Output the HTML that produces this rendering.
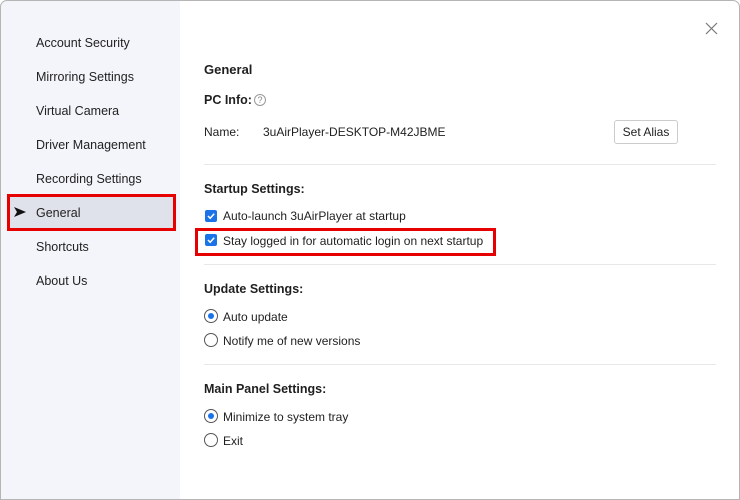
<!DOCTYPE html>
<html><head><style>
*{margin:0;padding:0;box-sizing:border-box}
body{width:740px;height:500px;background:#fff;font-family:"Liberation Sans",sans-serif;font-size:12px;color:#1f1f1f;position:relative;overflow:hidden}
.win{position:absolute;left:0;top:0;width:740px;height:500px;background:#fff;border-radius:7px 7px 0 0;overflow:hidden}
.frame{position:absolute;left:0;top:0;width:740px;height:500px;border:1px solid #b5b5b5;border-radius:7px 7px 0 0;pointer-events:none}
.side{position:absolute;left:0;top:0;width:180px;height:500px;background:#f3f5fa}
.nav{position:absolute;left:36px;font-size:12.5px;color:#222}
.sel{position:absolute;left:7px;top:194px;width:169px;height:37px;background:#dfe2ea;border:3px solid #e60000}
.t{position:absolute;white-space:nowrap}
.h{font-weight:bold;font-size:12.5px}
.cb{position:absolute;width:12px;height:12px;background:#1a73e8;border-radius:2px}
.cb svg{position:absolute;left:1px;top:1px}
.rd{position:absolute;width:14px;height:14px;border:1px solid #555;border-radius:50%;background:#fff}
.rd.on::after{content:"";position:absolute;left:3px;top:3px;width:6px;height:6px;border-radius:50%;background:#1a73e8}
.hr{position:absolute;left:204px;width:512px;height:1px;background:#e8e8e8}
</style></head><body>
<div class="win">
<div class="side"></div>
<div class="sel"></div>
<div class="nav" style="top:36px">Account Security</div>
<div class="nav" style="top:70px">Mirroring Settings</div>
<div class="nav" style="top:104px">Virtual Camera</div>
<div class="nav" style="top:138px">Driver Management</div>
<div class="nav" style="top:172px">Recording Settings</div>
<div class="nav" style="top:206px">General</div>
<svg style="position:absolute;left:14px;top:207px" width="12" height="10"><path d="M0 0 L12 5 L0 10 L3 5Z" fill="#111"/></svg>
<div class="nav" style="top:240px">Shortcuts</div>
<div class="nav" style="top:274px">About Us</div>

<svg style="position:absolute;left:705px;top:22px" width="13" height="13"><path d="M1 1L12 12M12 1L1 12" stroke="#777" stroke-width="1.2"/></svg>

<div class="t h" style="left:204px;top:62px;font-size:13px">General</div>
<div class="t h" style="left:204px;top:93px">PC Info:</div>
<div style="position:absolute;left:254px;top:94px;width:12px;height:12px;border:1px solid #999;border-radius:50%;font-size:9px;color:#888;text-align:center;line-height:10px">?</div>
<div class="t" style="left:204px;top:125px">Name:</div>
<div class="t" style="left:263px;top:125px">3uAirPlayer-DESKTOP-M42JBME</div>
<div style="position:absolute;left:614px;top:120px;width:64px;height:24px;border:1px solid #ccc;border-radius:3px;text-align:center;line-height:22px">Set Alias</div>
<div class="hr" style="top:164px"></div>
<div class="t h" style="left:204px;top:182px">Startup Settings:</div>
<div class="cb" style="left:205px;top:210px"><svg width="10" height="10"><path d="M2 5L4.2 7.3L8.2 2.8" stroke="#fff" stroke-width="1.5" fill="none"/></svg></div>
<div class="t" style="left:223px;top:209px">Auto-launch 3uAirPlayer at startup</div>
<div style="position:absolute;left:195px;top:228px;width:301px;height:28px;border:3px solid #e60000"></div>
<div class="cb" style="left:205px;top:234px"><svg width="10" height="10"><path d="M2 5L4.2 7.3L8.2 2.8" stroke="#fff" stroke-width="1.5" fill="none"/></svg></div>
<div class="t" style="left:223px;top:234px">Stay logged in for automatic login on next startup</div>
<div class="hr" style="top:264px"></div>
<div class="t h" style="left:204px;top:282px">Update Settings:</div>
<div class="rd on" style="left:204px;top:309px"></div>
<div class="t" style="left:223px;top:310px">Auto update</div>
<div class="rd" style="left:204px;top:333px"></div>
<div class="t" style="left:223px;top:334px">Notify me of new versions</div>
<div class="hr" style="top:364px"></div>
<div class="t h" style="left:204px;top:382px">Main Panel Settings:</div>
<div class="rd on" style="left:204px;top:409px"></div>
<div class="t" style="left:223px;top:410px">Minimize to system tray</div>
<div class="rd" style="left:204px;top:433px"></div>
<div class="t" style="left:223px;top:434px">Exit</div>
</div>
<div class="frame"></div>
</body></html>
